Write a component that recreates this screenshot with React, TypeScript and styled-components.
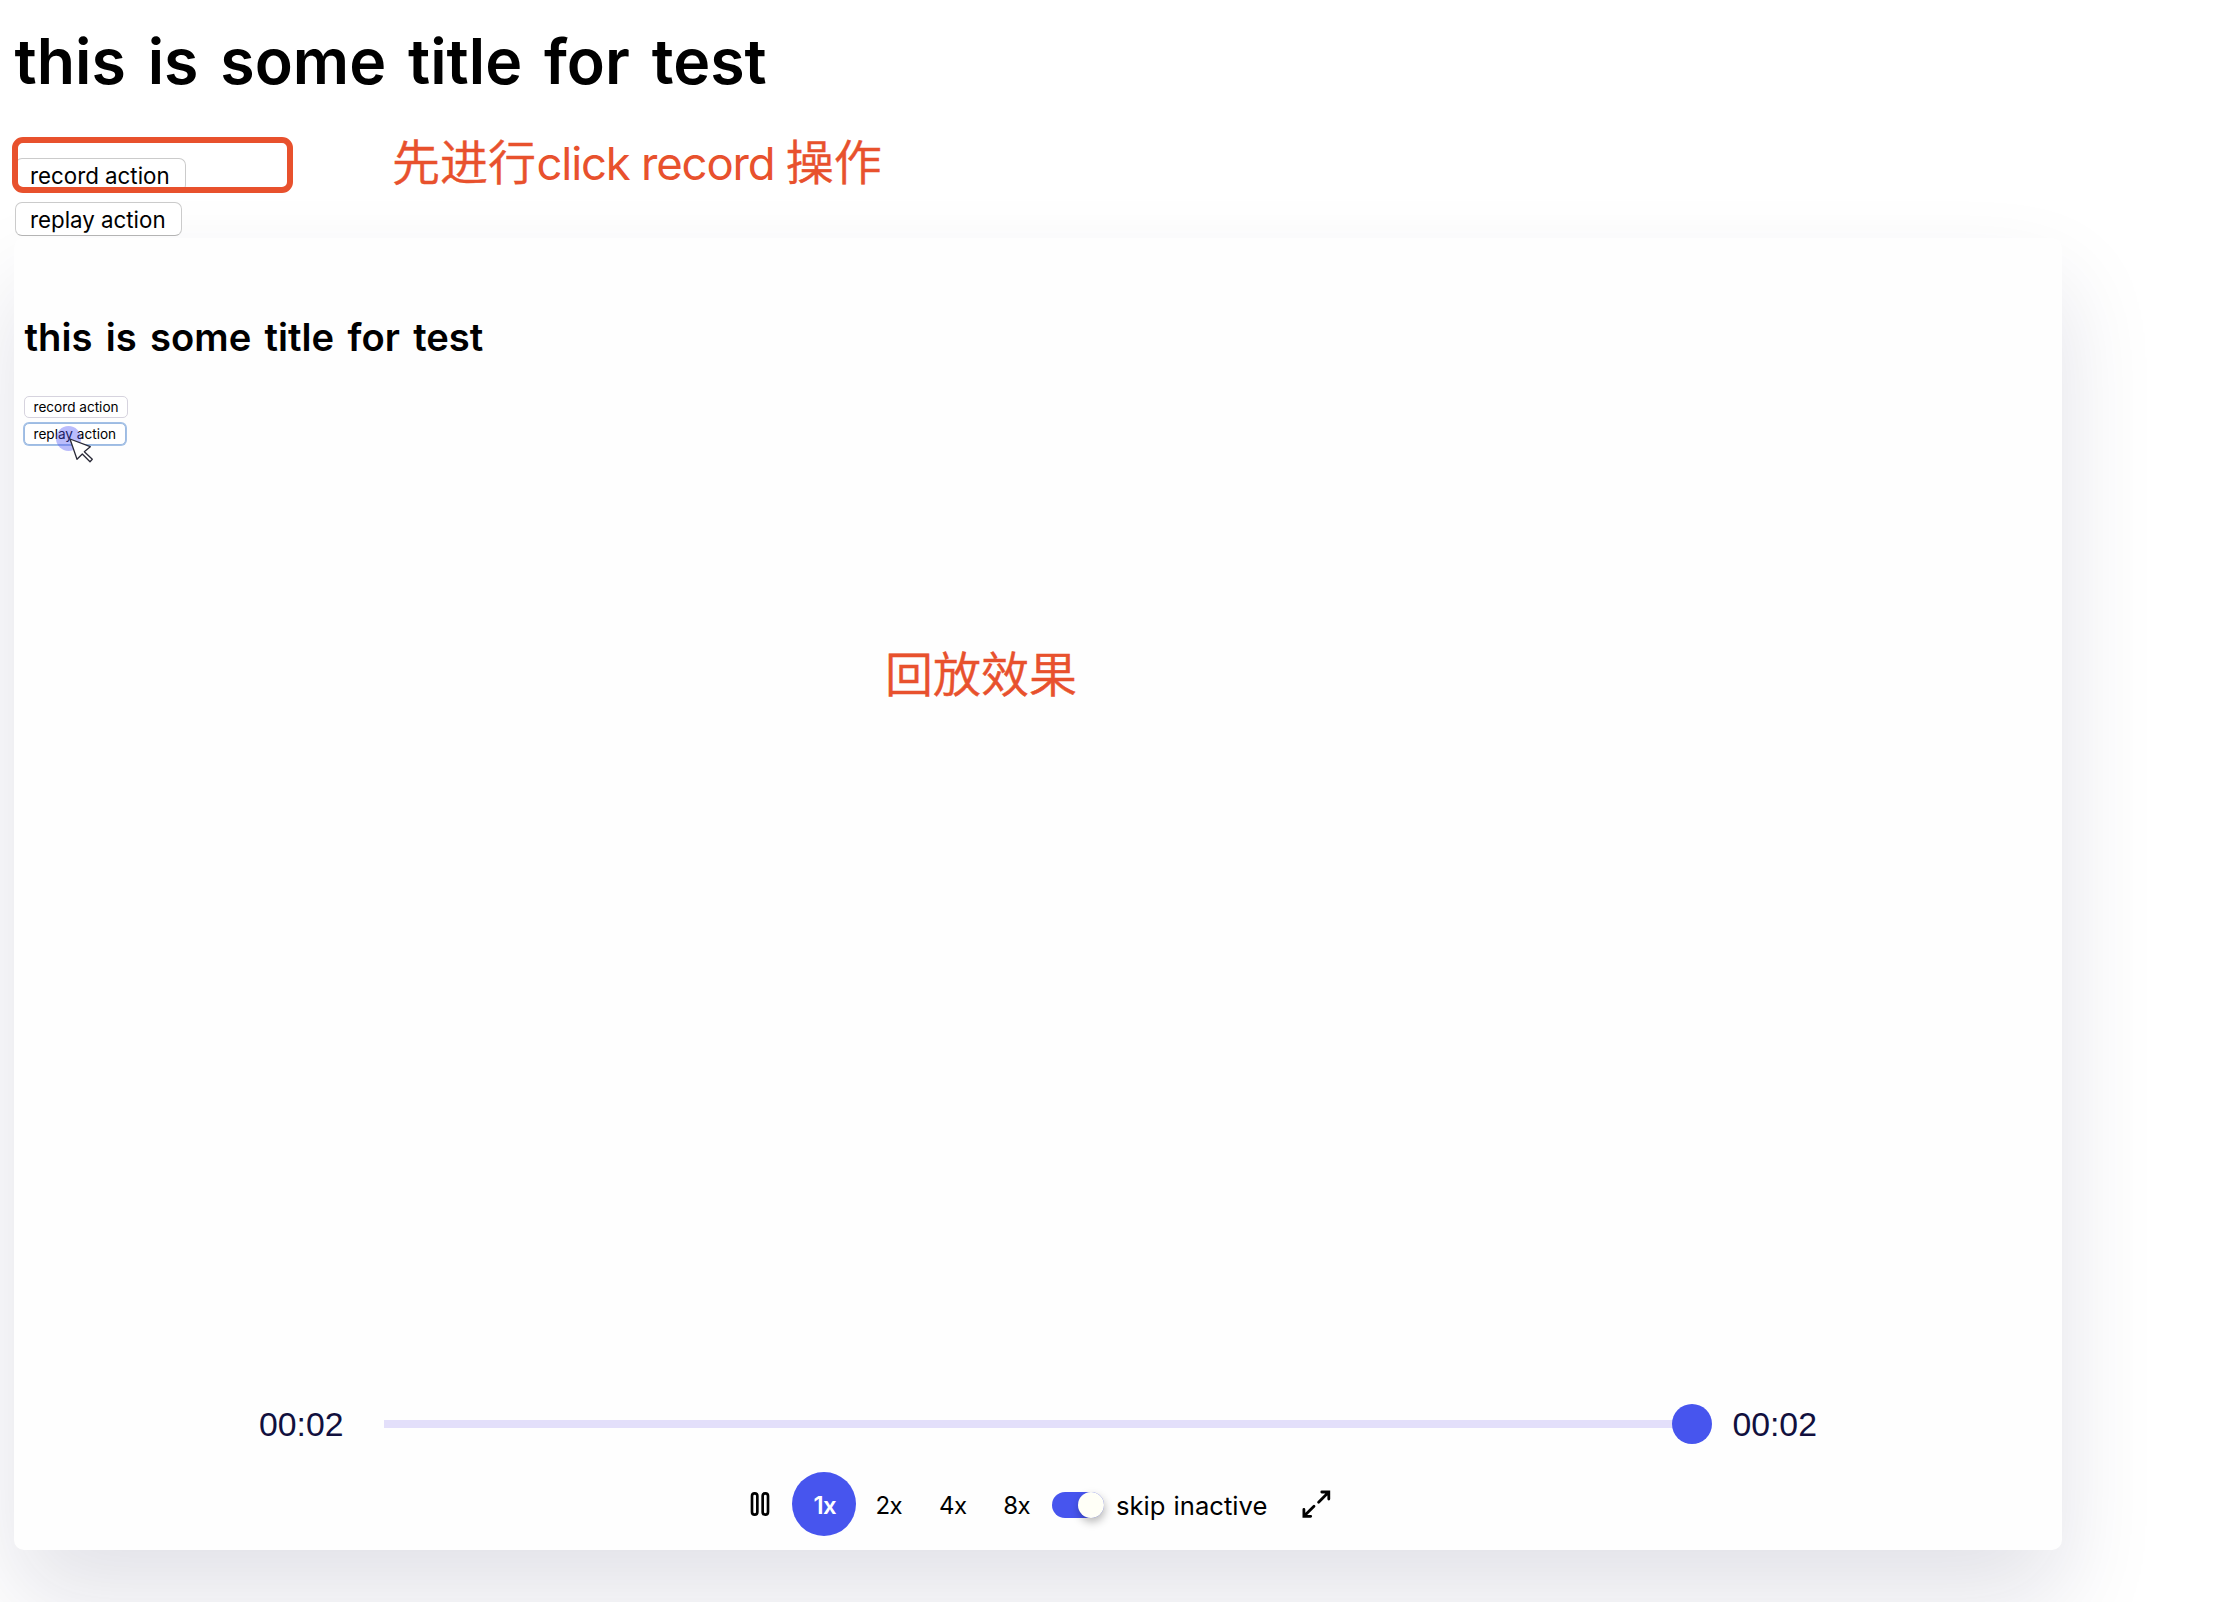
import styled, { createGlobalStyle, css } from "styled-components";

const accent = "#4755ee";
const note = "#e8512d";

const GlobalStyle = createGlobalStyle`
  body {
    margin: 0;
    background: #fff;
    color: #000;
    font-family: Inter, "Noto Sans CJK SC", sans-serif;
  }

  * {
    box-sizing: border-box;
  }
`;

const Page = styled.main`
  position: relative;
  width: 2222px;
  height: 1602px;
  padding: 23px 14px 0;
  overflow: hidden;
`;

const Title = styled.h1<{ $small?: boolean }>`
  margin: 0;
  font-size: 62.6px;
  font-weight: 600;
  line-height: 76px;
  word-spacing: 6.1px;
  text-indent: 0.5px;

  ${({ $small }) =>
    $small &&
    css`
      font-size: 38.2px;
      line-height: 46px;
      word-spacing: 3.7px;
    `}
`;

const Actions = styled.div<{ $small?: boolean }>`
  display: flex;
  flex-direction: column;
  align-items: flex-start;
  gap: ${({ $small }) => ($small ? "5px" : "10px")};
  margin-top: ${({ $small }) => ($small ? "36px" : "59px")};
`;

const ActionButton = styled.button<{ $small?: boolean; $focused?: boolean }>`
  height: 34px;
  margin-left: 1px;
  padding: 1px 15px 0 14px;
  border: 1px solid #cbcbcb;
  border-bottom-color: #b4b4b4;
  border-radius: 7px;
  background: #fff;
  color: #000;
  font-family: inherit;
  font-size: 22.3px;
  line-height: 30px;

  ${({ $small }) =>
    $small &&
    css`
      height: 22px;
      margin-left: 0;
      padding: 0 8.5px;
      border-color: #d6d3de;
      border-radius: 5px;
      font-size: 13.6px;
      line-height: 20px;
    `}

  ${({ $focused }) =>
    $focused &&
    css`
      border-color: #9dbbe2;
      box-shadow: 0 0 0 1px #a3c0e6;
    `}
`;

const Player = styled.section`
  display: flex;
  flex-direction: column;
  width: 2048px;
  height: 1312px;
  margin-top: 2px;
  border-radius: 10px;
  background: #fefefe;
  box-shadow: 0 48px 96px rgba(17, 16, 62, 0.12);
`;

const Frame = styled.div`
  position: relative;
  flex: 1;
  padding: 76px 10px 0;
`;

const ClickSpot = styled.span`
  position: absolute;
  top: 188px;
  left: 42px;
  width: 25px;
  height: 25px;
  border-radius: 50%;
  background: rgba(73, 80, 246, 0.38);
`;

const Cursor = styled.svg`
  position: absolute;
  top: 199px;
  left: 54px;
  width: 28px;
  height: 28px;
`;

const Timeline = styled.div`
  display: flex;
  align-items: center;
  width: 80%;
  height: 80px;
  margin: 0 auto;
`;

const Time = styled.span`
  width: 165px;
  color: #11103e;
  font-family: "Liberation Sans", Arial, sans-serif;
  font-size: 33.8px;
  line-height: 40px;
  text-align: center;
`;

const Progress = styled.div`
  display: flex;
  flex: 1;
  align-items: center;
  justify-content: flex-end;
  height: 8px;
  background: #e3dffa;
`;

const Handle = styled.span`
  flex: none;
  width: 40px;
  height: 40px;
  margin-right: -20px;
  border-radius: 50%;
  background: ${accent};
`;

const Controls = styled.div`
  display: flex;
  align-items: center;
  justify-content: center;
  height: 80px;
  margin-bottom: 6px;
`;

const ControlButton = styled.button<{ $active?: boolean }>`
  display: flex;
  align-items: center;
  justify-content: center;
  width: 64px;
  height: 64px;
  padding: 0;
  border: 0;
  border-radius: 50%;
  background: ${({ $active }) => ($active ? accent : "transparent")};
  color: ${({ $active }) => ($active ? "#fff" : "#000")};
  font-family: inherit;
  font-size: 24px;
  font-weight: ${({ $active }) => ($active ? 600 : 400)};
  letter-spacing: -0.6px;

  span {
    padding: 2px 0 0 1.5px;
  }
`;

const Skip = styled.label`
  display: flex;
  align-items: center;
  gap: 12px;
  width: 236px;
  padding: 2px 0 0 4px;
  font-size: 25.6px;
  white-space: nowrap;
  word-spacing: 1px;
`;

const Track = styled.span`
  display: flex;
  justify-content: flex-end;
  width: 52px;
  height: 26px;
  border-radius: 13px;
  background: ${accent};
`;

const Thumb = styled.span`
  width: 26px;
  height: 26px;
  border-radius: 50%;
  background: #fffff7;
  box-shadow: 1px 4px 8px rgba(0, 0, 0, 0.28);
`;

const Highlight = styled.div`
  position: absolute;
  top: 137px;
  left: 12px;
  width: 281px;
  height: 56px;
  border: 6px solid ${note};
  border-radius: 11px;
`;

const Note = styled.p<{ $x: number; $y: number }>`
  position: absolute;
  top: ${({ $y }) => $y}px;
  left: ${({ $x }) => $x}px;
  margin: 0;
  color: ${note};
  font-family: "Noto Sans CJK SC", sans-serif;
  font-size: 48px;
  font-weight: 350;
  line-height: 60px;
  white-space: nowrap;
  -webkit-text-stroke: 0.5px ${note};
`;

const Latin = styled.span`
  margin: 0 11.5px 0 0.5px;
  font-family: Inter, sans-serif;
  font-size: 45.5px;
  font-weight: 400;
  letter-spacing: -1.2px;
  -webkit-text-stroke: 0;
`;

const PauseIcon = () => (
  <svg width="32" height="32" viewBox="0 0 1024 1024" fill="none" stroke="currentColor" strokeWidth="85">
    <rect x="256" y="170.5" width="171" height="683" rx="85" />
    <rect x="597" y="170.5" width="171" height="683" rx="85" />
  </svg>
);

const FullscreenIcon = () => (
  <svg width="32" height="32" viewBox="0 0 32 32" fill="none" stroke="currentColor" strokeWidth="2.8" strokeLinecap="round">
    <path d="M21.8 4H28.8V11M28.3 4.5L18.6 14.2" />
    <path d="M10.7 28.3H3.9V21.5M4.4 27.8L14 18.2" />
  </svg>
);

const speeds = [1, 2, 4, 8];

export default function App() {
  return (
    <Page>
      <GlobalStyle />
      <Title>this is some title for test</Title>
      <Actions>
        <ActionButton>record action</ActionButton>
        <ActionButton>replay action</ActionButton>
      </Actions>

      <Player>
        <Frame>
          <Title as="h2" $small>
            this is some title for test
          </Title>
          <Actions $small>
            <ActionButton $small>record action</ActionButton>
            <ActionButton $small $focused>
              replay action
            </ActionButton>
          </Actions>
          <ClickSpot />
          <Cursor viewBox="0 0 28 28" fill="#fff" stroke="#2a2a38" strokeWidth="1.3" strokeLinejoin="round">
            <path d="M2 2L22.3 9.7L16.3 14.7L24.3 22.3L22 24.7L14.3 17L9 22.3Z" />
          </Cursor>
        </Frame>

        <Timeline>
          <Time>00:02</Time>
          <Progress>
            <Handle />
          </Progress>
          <Time>00:02</Time>
        </Timeline>

        <Controls>
          <ControlButton>
            <PauseIcon />
          </ControlButton>
          {speeds.map((speed) => (
            <ControlButton key={speed} $active={speed === 1}>
              <span>{speed}x</span>
            </ControlButton>
          ))}
          <Skip>
            <Track>
              <Thumb />
            </Track>
            skip inactive
          </Skip>
          <ControlButton>
            <FullscreenIcon />
          </ControlButton>
        </Controls>
      </Player>

      <Highlight />
      <Note $x={392} $y={129}>
        先进行<Latin>click record</Latin>操作
      </Note>
      <Note $x={885} $y={641}>
        回放效果
      </Note>
    </Page>
  );
}
